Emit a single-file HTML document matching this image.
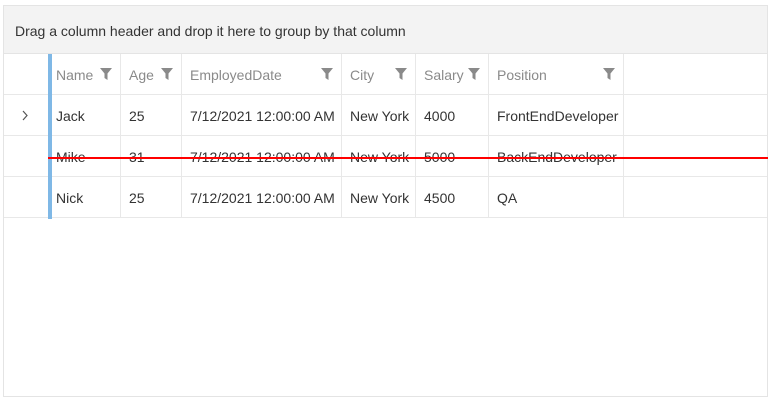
<!DOCTYPE html>
<html><head><style>
body{margin:0;background:#fff;font-family:"Liberation Sans",sans-serif;font-size:14px;color:#333;}
.g{position:absolute;left:3px;top:5px;width:763px;height:390px;border:1px solid #e4e4e4;}
.gp{position:absolute;left:0;top:0;width:763px;height:47px;background:#f3f3f3;border-bottom:1px solid #e4e4e4;}
.gp span{position:absolute;left:11px;top:17px;color:#333;}
.row{position:absolute;left:0;width:763px;height:41px;border-bottom:1px solid #e8e8e8;box-sizing:border-box;}
.c{position:absolute;top:0;height:40px;border-right:1px solid #e8e8e8;box-sizing:border-box;}
.c span{position:absolute;left:8px;top:13px;white-space:nowrap;}
.h span{color:#8a8a8a;}
.c svg{position:absolute;right:8px;top:14px;}
.a{left:44px;width:73px}.b{left:117px;width:61px}.d{left:178px;width:160px}.e{left:338px;width:74px}.f{left:412px;width:73px}.k{left:485px;width:135px}
.bar{position:absolute;left:44px;top:48px;width:4px;height:165px;background:#7fb8e6;}
.red{position:absolute;left:44px;top:151px;width:720px;height:2px;background:#f00;}
</style></head><body>
<div class="g">
<div class="gp"><span>Drag a column header and drop it here to group by that column</span></div>
<div class="row h" style="top:48px">
<div class="c a"><span>Name</span><svg width="12" height="12"><path d="M0 0H12L7.5 5.5V12L4.5 10V5.5Z" fill="#8a8a8a"/></svg></div>
<div class="c b"><span>Age</span><svg width="12" height="12"><path d="M0 0H12L7.5 5.5V12L4.5 10V5.5Z" fill="#8a8a8a"/></svg></div>
<div class="c d"><span>EmployedDate</span><svg width="12" height="12"><path d="M0 0H12L7.5 5.5V12L4.5 10V5.5Z" fill="#8a8a8a"/></svg></div>
<div class="c e"><span>City</span><svg width="12" height="12"><path d="M0 0H12L7.5 5.5V12L4.5 10V5.5Z" fill="#8a8a8a"/></svg></div>
<div class="c f"><span>Salary</span><svg width="12" height="12"><path d="M0 0H12L7.5 5.5V12L4.5 10V5.5Z" fill="#8a8a8a"/></svg></div>
<div class="c k"><span>Position</span><svg width="12" height="12"><path d="M0 0H12L7.5 5.5V12L4.5 10V5.5Z" fill="#8a8a8a"/></svg></div>
</div>
<div class="row" style="top:89px">
<div class="c a"><span>Jack</span></div><div class="c b"><span>25</span></div><div class="c d"><span>7/12/2021 12:00:00 AM</span></div><div class="c e"><span>New York</span></div><div class="c f"><span>4000</span></div><div class="c k"><span>FrontEndDeveloper</span></div>
</div>
<div class="row" style="top:130px">
<div class="c a"><span>Mike</span></div><div class="c b"><span>31</span></div><div class="c d"><span>7/12/2021 12:00:00 AM</span></div><div class="c e"><span>New York</span></div><div class="c f"><span>5000</span></div><div class="c k"><span>BackEndDeveloper</span></div>
</div>
<div class="row" style="top:171px">
<div class="c a"><span>Nick</span></div><div class="c b"><span>25</span></div><div class="c d"><span>7/12/2021 12:00:00 AM</span></div><div class="c e"><span>New York</span></div><div class="c f"><span>4500</span></div><div class="c k"><span>QA</span></div>
</div>
<div class="bar"></div>
<svg style="position:absolute;left:17px;top:104px" width="8" height="12"><path d="M2 1 L6 5.5 L2 10" fill="none" stroke="#555" stroke-width="1.2"/></svg>
<div class="red"></div>
</div>
</body></html>
